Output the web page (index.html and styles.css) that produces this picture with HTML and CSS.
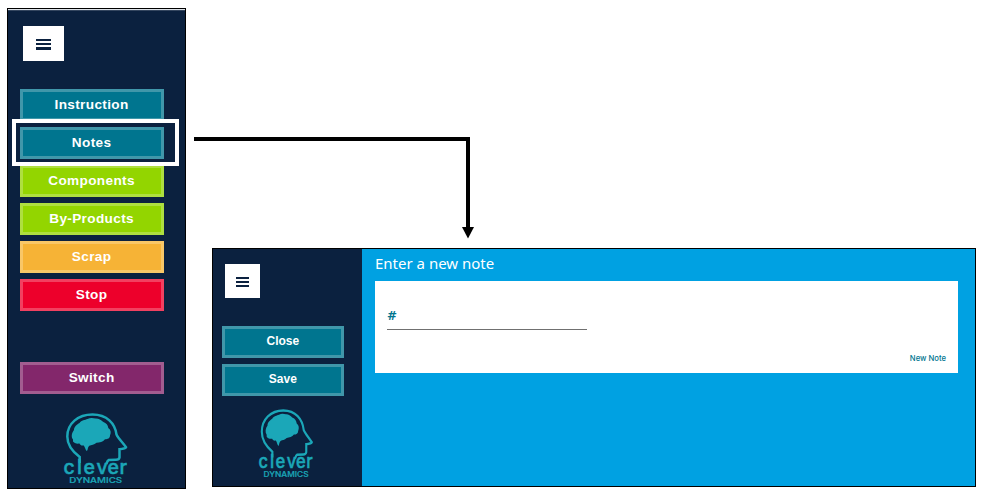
FILE: index.html
```
<!DOCTYPE html>
<html lang="en">
<head>
<meta charset="utf-8">
<title>Production notes</title>
<link rel="stylesheet" href="styles.css">
</head>
<body>
<main class="stage">
  <aside class="panel">
    <button class="menu" aria-label="Menu"><i></i><i></i><i></i></button>
    <nav class="actions">
      <button class="btn teal">Instruction</button>
      <button class="btn teal marked">Notes</button>
      <button class="btn green">Components</button>
      <button class="btn green">By-Products</button>
      <button class="btn orange">Scrap</button>
      <button class="btn red">Stop</button>
      <button class="btn purple">Switch</button>
    </nav>
    <svg class="logo" viewBox="0 0 64 72" preserveAspectRatio="none">
      <path class="head" d="M15.700 50V44C9 39 3.300 33 3.300 23.500C3.300 10.500 14 1.500 28.500 1.500C43 1.500 51 10.500 52.500 21.500C54 25 59 30 62 34.200Q61.500 35.500 55.500 36.200V44.500Q55 46.700 52 46.800L44.800 47Q43.500 47.500 42.300 51"/>
      <path class="brain" d="M9 26.500C7 24 7.500 20 10 17C10 13.500 13 11.500 15.500 10C17.500 7 21 7 23.500 6C26 4.500 29 4.800 31.500 5.500C34.500 5.300 37 7 39 8.800C42.500 10 44 12.500 44.300 15C47 17 47.300 19.500 46 22.500C46 25.500 43 26.500 41 26.300C39 29 35.500 29.500 32.500 29.800C30 32 27.500 31.800 25.300 32.800C23.500 34 24 37 22.900 38C21.500 37.500 21.300 34.500 19.800 32.500C17 33 16 31.500 15.500 30.500C12.500 31 10 30 9 28.500Z"/>
      <text class="word" x="-.5 13 19.500 32.500 43.500 55.500" y="60.500">clever</text>
      <text class="sub" x="5.200" y="70" textLength="53" lengthAdjust="spacingAndGlyphs">DYNAMICS</text>
    </svg>
  </aside>
  <div class="flow">
    <svg class="arrow" viewBox="0 0 282 105"><path d="M0 3H274V92" fill="none" stroke="#000" stroke-width="4"/><path d="M268 91H280L274 102.500Z"/></svg>
    <section class="window">
      <aside class="side">
        <button class="menu" aria-label="Menu"><i></i><i></i><i></i></button>
        <nav class="actions">
          <button class="btn teal">Close</button>
          <button class="btn teal">Save</button>
        </nav>
        <svg class="logo" viewBox="0 0 64 72" preserveAspectRatio="none">
          <path class="head" d="M15.700 50V44C9 39 3.300 33 3.300 23.500C3.300 10.500 14 1.500 28.500 1.500C43 1.500 51 10.500 52.500 21.500C54 25 59 30 62 34.200Q61.500 35.500 55.500 36.200V44.500Q55 46.700 52 46.800L44.800 47Q43.500 47.500 42.300 51"/>
          <path class="brain" d="M9 26.500C7 24 7.500 20 10 17C10 13.500 13 11.500 15.500 10C17.500 7 21 7 23.500 6C26 4.500 29 4.800 31.500 5.500C34.500 5.300 37 7 39 8.800C42.500 10 44 12.500 44.300 15C47 17 47.300 19.500 46 22.500C46 25.500 43 26.500 41 26.300C39 29 35.500 29.500 32.500 29.800C30 32 27.500 31.800 25.300 32.800C23.500 34 24 37 22.900 38C21.500 37.500 21.300 34.500 19.800 32.500C17 33 16 31.500 15.500 30.500C12.500 31 10 30 9 28.500Z"/>
          <text class="word" x="-.5 13 19.500 32.500 43.500 55.500" y="60.500">clever</text>
          <text class="sub" x="5.200" y="70" textLength="53" lengthAdjust="spacingAndGlyphs">DYNAMICS</text>
        </svg>
      </aside>
      <div class="content">
        <h1>Enter a new note</h1>
        <div class="card">
          <div class="field">#</div>
          <span class="new">New Note</span>
        </div>
      </div>
    </section>
  </div>
</main>
</body>
</html>
```
FILE: styles.css
```
*, *::after { box-sizing: border-box; }
body { margin: 0; background: #fff; font-family: "Liberation Sans", Arial, sans-serif; overflow: hidden; }
.stage { display: flex; width: 982px; height: 495px; padding: 8px 0 0 7px; }

.panel { display: flex; flex-direction: column; width: 179px; height: 481px; padding: 16px 0 0 11.600px; border: 1px solid #000; background: #0b213f; box-shadow: inset 0 1px #dce1e7, inset 0 2px #34465f; }
.menu { display: flex; flex-direction: column; align-items: center; justify-content: center; gap: 2px; width: 41px; height: 34.500px; margin: 1px 0 0 3.400px; padding: 2px 0 0; border: 0; background: #fff; }
.menu i { width: 15px; height: 2.200px; background: #0b213f; }
.actions { display: flex; flex-direction: column; gap: 6.200px; margin-top: 28px; }
.btn { width: 144px; height: 32px; padding: 0 0 1px 0; border: 3px solid; color: #fff; font: bold 13.600px "Liberation Sans", Arial, sans-serif; letter-spacing: .35px; text-align: center; }
.teal { background: #00758f; border-color: #4097aa; }
.green { background: #93d500; border-color: #aedf40; }
.orange { background: #f6b336; border-color: #f9c767; }
.red { background: #ed002b; border-color: #f24060; }
.purple { background: #83276b; border-color: #a25d90; margin-top: 44px; }
.marked { position: relative; z-index: 1; }
.marked::after { content: ""; position: absolute; left: -10.600px; top: -10.700px; width: 167px; height: 47px; border: 4px solid #fff; }

.logo { width: 64px; height: 72px; margin: 19.700px 0 0 44px; overflow: visible; }
.head { fill: none; stroke: #1ba7b8; stroke-width: 2.500; }
.brain { fill: #1ba7b8; }
.word { font: 500 19.500px Inter, sans-serif; fill: #1ba7b8; stroke: #1ba7b8; stroke-width: .5; }
.sub { font: 500 7.600px Inter, sans-serif; fill: #1ba7b8; stroke: #1ba7b8; stroke-width: .2; }

.flow { display: flex; flex-direction: column; padding: 128px 0 0 8px; }
.arrow { width: 282px; height: 105px; }
.window { display: flex; width: 764px; height: 239px; margin: 7px 0 0 18px; border: 1px solid #000; background: #00a1e2; }
.side { display: flex; flex-direction: column; width: 149px; padding: 14px 0 0 8.600px; background: #0b213f; }
.side .menu { width: 35px; height: 34px; gap: 2px; margin-left: 3.100px; }
.side .menu i { width: 13px; }
.side .actions { gap: 5.600px; }
.side .btn { width: 122.500px; font-size: 12px; letter-spacing: 0; padding-bottom: 2px; }
.side .logo { width: 54.500px; height: 70px; margin: 13px 0 0 37.400px; }
.content { flex: 1; padding: 0 17px 0 13px; }
h1 { margin: 0; height: 32px; color: #fff; font: 15px/28px "Noto Sans", sans-serif; }
.card { display: flex; flex-direction: column; justify-content: space-between; height: 92px; padding: 24px 12px 8px; background: #fff; }
.field { width: 200px; height: 25px; border-bottom: 1px solid #707070; color: #00758f; font: bold 12px/23px "DejaVu Sans", sans-serif; }
.new { align-self: flex-end; color: #00758f; font: 500 7.700px/12px Inter, sans-serif; }
```
